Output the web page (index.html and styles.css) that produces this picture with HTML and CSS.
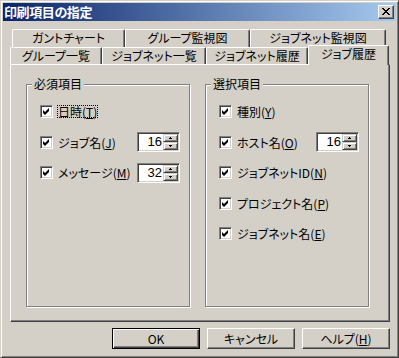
FILE: index.html
```html
<!DOCTYPE html>
<html lang="ja">
<head>
<meta charset="utf-8">
<title>印刷項目の指定</title>
<link rel="stylesheet" href="styles.css">
</head>
<body>
<div class="window">
  <div class="titlebar">
    <span class="title">印刷項目の指定</span>
    <span class="close"><svg width="8" height="7" viewBox="0 0 8 7"><path d="M0 0h2l2 2.5L6 0h2L5 3.5 8 7H6L4 4.5 2 7H0l3-3.5z" fill="#000" shape-rendering="crispEdges"/></svg></span>
  </div>
  <div class="tabs">
    <div class="tabrow back">
      <div class="tab w113">ガントチャート</div>
      <div class="tab w125">グループ監視図</div>
      <div class="tab w136">ジョブネット監視図</div>
    </div>
    <div class="tabrow front">
      <div class="tab w92">グループ一覧</div>
      <div class="tab w104">ジョブネット一覧</div>
      <div class="tab w102">ジョブネット履歴</div>
      <div class="tab w81 selected">ジョブ履歴</div>
    </div>
  </div>
  <div class="panel">
    <fieldset class="group">
      <legend>必須項目</legend>
      <div class="rows">
        <div class="row"><span class="check"><svg width="7" height="7" viewBox="0 0 7 7"><path d="M0 2l2 2 4-4v3L2 7 0 5z" fill="#000"/></svg></span><span class="label focus">日時(<u>T</u>)</span></div>
        <div class="row"><span class="check"><svg width="7" height="7" viewBox="0 0 7 7"><path d="M0 2l2 2 4-4v3L2 7 0 5z" fill="#000"/></svg></span><span class="label">ジョブ名(<u>J</u>)</span>
          <span class="spin"><span class="spin-val">16</span><span class="spin-btns"><span class="spin-btn"><svg width="3" height="2" viewBox="0 0 3 2"><rect x="1" y="0" width="1" height="1"/><rect x="0" y="1" width="3" height="1"/></svg></span><span class="spin-btn"><svg width="3" height="2" viewBox="0 0 3 2"><rect x="0" y="0" width="3" height="1"/><rect x="1" y="1" width="1" height="1"/></svg></span></span></span></div>
        <div class="row"><span class="check"><svg width="7" height="7" viewBox="0 0 7 7"><path d="M0 2l2 2 4-4v3L2 7 0 5z" fill="#000"/></svg></span><span class="label">メッセージ(<u>M</u>)</span>
          <span class="spin"><span class="spin-val">32</span><span class="spin-btns"><span class="spin-btn"><svg width="3" height="2" viewBox="0 0 3 2"><rect x="1" y="0" width="1" height="1"/><rect x="0" y="1" width="3" height="1"/></svg></span><span class="spin-btn"><svg width="3" height="2" viewBox="0 0 3 2"><rect x="0" y="0" width="3" height="1"/><rect x="1" y="1" width="1" height="1"/></svg></span></span></span></div>
      </div>
    </fieldset>
    <fieldset class="group">
      <legend>選択項目</legend>
      <div class="rows">
        <div class="row"><span class="check"><svg width="7" height="7" viewBox="0 0 7 7"><path d="M0 2l2 2 4-4v3L2 7 0 5z" fill="#000"/></svg></span><span class="label">種別(<u>Y</u>)</span></div>
        <div class="row"><span class="check"><svg width="7" height="7" viewBox="0 0 7 7"><path d="M0 2l2 2 4-4v3L2 7 0 5z" fill="#000"/></svg></span><span class="label">ホスト名(<u>O</u>)</span>
          <span class="spin"><span class="spin-val">16</span><span class="spin-btns"><span class="spin-btn"><svg width="3" height="2" viewBox="0 0 3 2"><rect x="1" y="0" width="1" height="1"/><rect x="0" y="1" width="3" height="1"/></svg></span><span class="spin-btn"><svg width="3" height="2" viewBox="0 0 3 2"><rect x="0" y="0" width="3" height="1"/><rect x="1" y="1" width="1" height="1"/></svg></span></span></span></div>
        <div class="row"><span class="check"><svg width="7" height="7" viewBox="0 0 7 7"><path d="M0 2l2 2 4-4v3L2 7 0 5z" fill="#000"/></svg></span><span class="label">ジョブネットID(<u>N</u>)</span></div>
        <div class="row"><span class="check"><svg width="7" height="7" viewBox="0 0 7 7"><path d="M0 2l2 2 4-4v3L2 7 0 5z" fill="#000"/></svg></span><span class="label">プロジェクト名(<u>P</u>)</span></div>
        <div class="row"><span class="check"><svg width="7" height="7" viewBox="0 0 7 7"><path d="M0 2l2 2 4-4v3L2 7 0 5z" fill="#000"/></svg></span><span class="label">ジョブネット名(<u>E</u>)</span></div>
      </div>
    </fieldset>
  </div>
  <div class="buttons">
    <button class="btn default">OK</button>
    <button class="btn">キャンセル</button>
    <button class="btn">ヘルプ(<u>H</u>)</button>
  </div>
</div>
</body>
</html>
```
FILE: styles.css
```css
* { box-sizing: border-box; }
html, body { margin: 0; padding: 0; }
body {
  background: #d4d0c8;
  font-family: "Noto Sans CJK JP", "Noto Sans", sans-serif;
  font-size: 12px;
  color: #000;
  font-feature-settings: "palt" 1;
}
.window {
  width: 399px;
  height: 358px;
  border: 1px solid;
  border-color: #d4d0c8 #404040 #404040 #d4d0c8;
  box-shadow: inset 1px 1px 0 #fff, inset -1px -1px 0 #808080;
  padding: 2px;
  background: #d4d0c8;
}
.titlebar {
  height: 18px;
  display: flex;
  align-items: center;
  justify-content: space-between;
  background: linear-gradient(to right, #0a246a, #a6caf0);
  padding: 0 2px 0 1px;
}
.title {
  color: #fff;
  font-weight: bold;
  font-size: 13px;
  line-height: 18px;
  letter-spacing: -0.4px;
}
.close {
  width: 16px;
  height: 14px;
  background: #d4d0c8;
  border: 1px solid;
  border-color: #fff #404040 #404040 #fff;
  box-shadow: inset -1px -1px 0 #808080;
  display: flex;
  align-items: center;
  justify-content: center;
  padding-bottom: 1px;
}
.tabs { margin-top: 8px; }
.tabrow { display: flex; }
.tabrow.back { margin-left: 9px; height: 18px; }
.tabrow.front { margin-left: 7px; height: 17px; position: relative; z-index: 1; }
.tab {
  border-top: 1px solid #fff;
  border-left: 1px solid #fff;
  border-right: 1px solid #404040;
  box-shadow: inset -1px 0 0 #808080;
  border-radius: 2px 2px 0 0;
  text-align: center;
  line-height: 15px;
  white-space: nowrap;
  background: #d4d0c8;
  flex: none;
}
.back .tab { height: 18px; }
.front .tab { height: 17px; }
.tab.selected { height: 20px; margin-top: -2px; }
.w113 { width: 113px; }
.w125 { width: 125px; }
.w136 { width: 136px; }
.w92 { width: 92px; }
.w104 { width: 104px; }
.w102 { width: 102px; }
.w81 { width: 81px; }

.panel {
  margin-left: 7px;
  width: 380px;
  height: 258px;
  border: 1px solid;
  border-color: #fff #404040 #404040 #fff;
  box-shadow: inset -1px -1px 0 #808080;
  padding: 12px 20px 14px 15px;
  display: flex;
  gap: 15px;
}
.group {
  margin: 0;
  padding: 0;
  min-width: 0;
  width: 164px;
  height: 230px;
  border: 1px solid #808080;
  box-shadow: inset 1px 1px 0 #fff, 1px 1px 0 #fff;
}
.group legend {
  margin-left: 5px;
  padding: 0 2px;
  line-height: 14px;
  background: #d4d0c8;
}
.rows {
  display: flex;
  flex-direction: column;
  gap: 9.5px;
  padding: 10px 0 0 13px;
}
.row {
  display: grid;
  grid-template-columns: 13px 76px 43px;
  column-gap: 4px;
  align-items: center;
  height: 21px;
}
.check {
  width: 13px;
  height: 13px;
  background: #fff;
  border: 1px solid;
  border-color: #808080 #fff #fff #808080;
  box-shadow: inset 1px 1px 0 #404040, inset -1px -1px 0 #d4d0c8;
  display: flex;
  align-items: center;
  justify-content: center;
}
.check svg { display: block; }
.label {
  justify-self: start;
  white-space: nowrap;
  line-height: 13px;
  height: 13px;
  padding: 0 1px;
}
.label.focus { outline: 1px dotted #000; outline-offset: -1px; }
u { text-decoration: underline; text-underline-offset: 1px; }
.spin {
  display: flex;
  width: 43px;
  height: 20px;
  background: #fff;
  border: 1px solid;
  border-color: #808080 #fff #fff #808080;
  box-shadow: inset 1px 1px 0 #404040, inset -1px -1px 0 #d4d0c8;
  padding: 1px;
}
.spin-val {
  flex: 1;
  text-align: right;
  line-height: 16px;
  padding-right: 1px;
  font-family: "Liberation Sans", sans-serif;
  font-size: 13px;
}
.spin-btns {
  width: 15px;
  display: flex;
  flex-direction: column;
}
.spin-btn {
  flex: 1;
  background: #d4d0c8;
  border: 1px solid;
  border-color: #d4d0c8 #404040 #404040 #d4d0c8;
  box-shadow: inset 1px 1px 0 #fff, inset -1px -1px 0 #808080;
  display: flex;
  align-items: center;
  justify-content: center;
}
.spin-btn svg { display: block; }
.buttons {
  display: flex;
  justify-content: flex-end;
  gap: 7px;
  margin-left: 7px;
  width: 380px;
  margin-top: 6px;
}
.btn {
  width: 88px;
  height: 21px;
  font: inherit;
  color: #000;
  background: #d4d0c8;
  border: 1px solid;
  border-color: #fff #404040 #404040 #fff;
  box-shadow: inset -1px -1px 0 #808080;
  padding: 0;
  line-height: 17px;
}
.btn.default {
  border-color: #000;
  box-shadow: inset 1px 1px 0 #fff, inset -1px -1px 0 #404040, inset -2px -2px 0 #808080;
}
```
